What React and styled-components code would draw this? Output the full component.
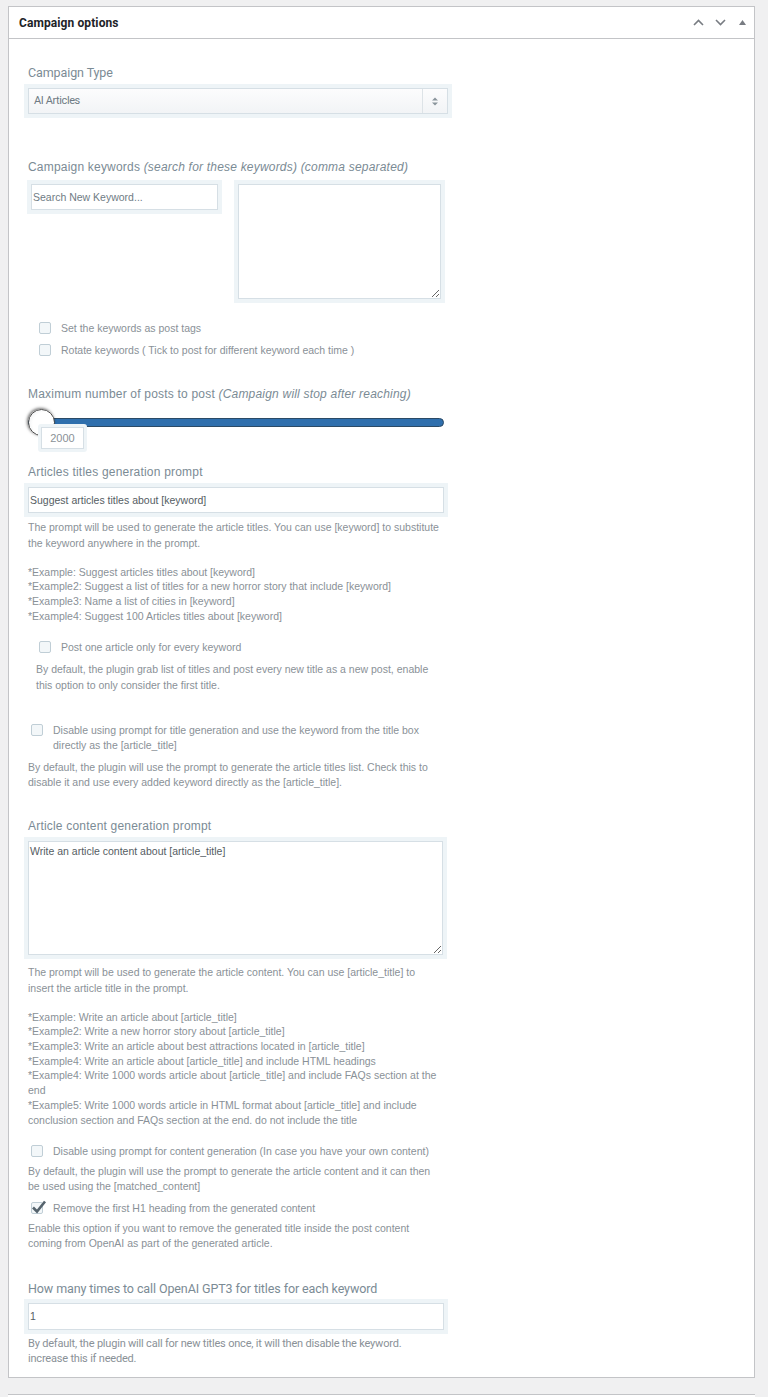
import React from "react";
import styled, { createGlobalStyle } from "styled-components";

const GlobalStyle = createGlobalStyle`
  body {
    margin: 0;
    background: #f0f0f1;
    font-family: "Liberation Sans", Arial, sans-serif;
  }
`;

const Page = styled.div`
  padding: 6px 13px 0 8px;
`;

const Postbox = styled.div`
  background: #fff;
  border: 1px solid #c3c4c7;
`;

const NextPostbox = styled.div`
  margin-top: 16px;
  height: 4px;
  background: #fff;
  border-top: 1px solid #c3c4c7;
`;

const PostboxHeader = styled.div`
  display: flex;
  align-items: center;
  height: 31px;
  padding: 0 6px 0 10px;
  border-bottom: 1px solid #c3c4c7;
`;

const HeaderTitle = styled.h2`
  flex: 1;
  margin: 0;
  font-family: Roboto, "Liberation Sans", sans-serif;
  font-size: 12px;
  font-weight: 700;
  letter-spacing: 0.1px;
  color: #1d2327;
`;

const HeaderActions = styled.div`
  display: flex;
  align-items: center;
  gap: 10px;
`;

const HandleButton = styled.span`
  display: flex;
  align-items: center;
  justify-content: center;
  width: 12px;
  height: 12px;
  color: #787c82;
`;

const Body = styled.div`
  padding: 0 0 11px 19px;
`;

const Label = styled.div`
  margin-top: ${(p) => p.$top || 0}px;
  font-family: ${(p) =>
    p.$narrow ? 'Roboto, "Liberation Sans", sans-serif' : '"Liberation Sans", Arial, sans-serif'};
  font-size: ${(p) => (p.$narrow ? "12.5px" : "12px")};
  letter-spacing: ${(p) => (p.$narrow ? "-0.1px" : "0.2px")};
  line-height: 16px;
  color: #7b8b95;

  em {
    font-style: italic;
  }
`;

const SelectBox = styled.div`
  display: flex;
  margin-top: 7px;
  width: 418px;
  height: 24px;
  border: 1px solid #d6dfe5;
  background: linear-gradient(#fcfcfd, #f2f4f6);
  box-shadow: 0 0 0 4px #eef4f7;
`;

const SelectValue = styled.span`
  flex: 1;
  padding-left: 5px;
  line-height: 24px;
  font-family: Roboto, "Liberation Sans", sans-serif;
  font-size: 11px;
  letter-spacing: -0.4px;
  color: #6e7b83;
`;

const SelectArrows = styled.span`
  display: flex;
  align-items: center;
  justify-content: center;
  width: 24px;
  border-left: 1px solid #dde3e7;
  color: #8a959c;
`;

const KeywordRow = styled.div`
  display: flex;
  align-items: flex-start;
  gap: 20px;
  margin-top: 9px;
  padding-left: 3px;
`;

const TextInput = styled.input`
  display: block;
  box-sizing: border-box;
  margin: ${(p) => p.$top || 0}px 0 0;
  width: ${(p) => p.$width}px;
  height: ${(p) => p.$height || 26}px;
  padding: 0 1px;
  border: 1px solid #d6dfe5;
  border-radius: 0;
  background: #fff;
  box-shadow: 0 0 0 4px #eef4f7;
  font-family: "Liberation Sans", Arial, sans-serif;
  font-size: 10.5px;
  color: #555d63;
  outline: none;

  &::placeholder {
    color: #6f7c84;
  }
`;

const TextArea = styled.textarea`
  display: block;
  box-sizing: border-box;
  margin: ${(p) => p.$top || 0}px 0 0;
  width: ${(p) => p.$width}px;
  height: ${(p) => p.$height}px;
  padding: 3px 1px;
  border: 1px solid #d6dfe5;
  border-radius: 0;
  background: #fff;
  box-shadow: 0 0 0 4px #eef4f7;
  font-family: "Liberation Sans", Arial, sans-serif;
  font-size: 10.5px;
  color: #555d63;
  outline: none;
`;

const CheckList = styled.div`
  display: flex;
  flex-direction: column;
  gap: 6px;
  margin-top: ${(p) => p.$top || 0}px;
`;

const CheckRow = styled.label`
  display: flex;
  align-items: flex-start;
  gap: 10px;
  margin-top: ${(p) => p.$top || 0}px;
  padding-left: ${(p) => p.$indent || 0}px;
  font-size: 10.5px;
  line-height: ${(p) => p.$lh || 16}px;
  white-space: nowrap;
  color: #8a9197;
`;

const Box = styled.span`
  position: relative;
  flex: none;
  box-sizing: border-box;
  width: 12px;
  height: 12px;
  margin-top: ${(p) => p.$offset || 2}px;
  border: 1px solid #c0ced6;
  border-radius: 2px;
  background: #f3f7f9;

  svg {
    position: absolute;
    left: -1px;
    top: -3px;
  }
`;

const Help = styled.p`
  margin: ${(p) => p.$top || 0}px 0 0;
  padding-left: ${(p) => p.$indent || 0}px;
  font-family: ${(p) =>
    p.$narrow ? 'Roboto, "Liberation Sans", sans-serif' : '"Liberation Sans", Arial, sans-serif'};
  font-size: ${(p) => (p.$narrow ? "11px" : "10.5px")};
  letter-spacing: ${(p) => (p.$narrow ? "-0.2px" : "0")};
  line-height: ${(p) => p.$lh || 16}px;
  white-space: nowrap;
  color: #8a9197;
`;

const Examples = styled.div`
  margin-top: ${(p) => p.$top || 0}px;
  font-size: 10.5px;
  line-height: 14.7px;
  white-space: nowrap;
  color: #8a9197;
`;

const SliderWrap = styled.div`
  position: relative;
  margin-top: 16px;
  width: 416px;
  height: 46px;
`;

const Track = styled.div`
  height: 9px;
  box-sizing: border-box;
  border: 1px solid #2b4a66;
  border-radius: 5px;
  background: #2f6fad;
`;

const Knob = styled.span`
  position: absolute;
  left: 0;
  top: -9px;
  box-sizing: border-box;
  width: 27px;
  height: 27px;
  border: 1px solid #4a4a4a;
  border-radius: 50%;
  background: radial-gradient(circle at 60% 55%, #ffffff 55%, #e4e6e8);
  box-shadow: -1px -1px 3px rgba(0, 0, 0, 0.55);
`;

const Bubble = styled.div`
  position: absolute;
  left: 10px;
  top: 6px;
  padding: 3px;
  background: #eef4f7;
  border-radius: 3px;
`;

const BubbleValue = styled.div`
  width: 41px;
  height: 20px;
  border: 1px solid #d6dfe5;
  background: #fff;
  text-align: center;
  font-size: 11px;
  line-height: 20px;
  color: #8a9197;
`;

const ChevronIcon = ({ up }) => (
  <svg width="11" height="7" viewBox="0 0 11 7" fill="none">
    <path
      d={up ? "M1 6 L5.5 1.5 L10 6" : "M1 1 L5.5 5.5 L10 1"}
      stroke="currentColor"
      strokeWidth="1.6"
    />
  </svg>
);

const TriangleIcon = () => (
  <svg width="7" height="5" viewBox="0 0 7 5">
    <path d="M0 5 L3.5 0 L7 5 Z" fill="currentColor" />
  </svg>
);

const SortArrows = () => (
  <svg width="6" height="9" viewBox="0 0 6 9">
    <path d="M0 3.5 L3 0.5 L6 3.5 Z M0 5.5 L3 8.5 L6 5.5 Z" fill="currentColor" />
  </svg>
);

const Checkbox = ({ checked, offset }) => (
  <Box $offset={offset}>
    {checked && (
      <svg width="16" height="14" viewBox="0 0 16 14">
        <path d="M2 7.5 L6 11.5 L14 1.5" fill="none" stroke="#55636d" strokeWidth="2.6" />
      </svg>
    )}
  </Box>
);

const Lines = ({ lines }) =>
  lines.map((line, i) => (
    <React.Fragment key={i}>
      {i > 0 && <br />}
      {line}
    </React.Fragment>
  ));

const titleExamples = [
  "*Example: Suggest articles titles about [keyword]",
  "*Example2: Suggest a list of titles for a new horror story that include [keyword]",
  "*Example3: Name a list of cities in [keyword]",
  "*Example4: Suggest 100 Articles titles about [keyword]",
];

const contentExamples = [
  "*Example: Write an article about [article_title]",
  "*Example2: Write a new horror story about [article_title]",
  "*Example3: Write an article about best attractions located in [article_title]",
  "*Example4: Write an article about [article_title] and include HTML headings",
  "*Example4: Write 1000 words article about [article_title] and include FAQs section at the",
  "end",
  "*Example5: Write 1000 words article in HTML format about [article_title] and include",
  "conclusion section and FAQs section at the end. do not include the title",
];

const App = () => {
  return (
    <Page>
      <GlobalStyle />
      <Postbox>
        <PostboxHeader>
          <HeaderTitle>Campaign options</HeaderTitle>
          <HeaderActions>
            <HandleButton>
              <ChevronIcon up />
            </HandleButton>
            <HandleButton>
              <ChevronIcon />
            </HandleButton>
            <HandleButton>
              <TriangleIcon />
            </HandleButton>
          </HeaderActions>
        </PostboxHeader>

        <Body>
          <Label $top={26} $narrow>
            Campaign Type
          </Label>
          <SelectBox>
            <SelectValue>AI Articles</SelectValue>
            <SelectArrows>
              <SortArrows />
            </SelectArrows>
          </SelectBox>

          <Label $top={45}>
            Campaign keywords <em>(search for these keywords) (comma separated)</em>
          </Label>
          <KeywordRow>
            <TextInput $width={187} placeholder="Search New Keyword..." />
            <TextArea $width={203} $height={115} />
          </KeywordRow>

          <CheckList $top={21}>
            <CheckRow $indent={11}>
              <Checkbox />
              Set the keywords as post tags
            </CheckRow>
            <CheckRow $indent={11}>
              <Checkbox />
              Rotate keywords ( Tick to post for different keyword each time )
            </CheckRow>
          </CheckList>

          <Label $top={28}>
            Maximum number of posts to post <em>(Campaign will stop after reaching)</em>
          </Label>
          <SliderWrap>
            <Track />
            <Knob />
            <Bubble>
              <BubbleValue>2000</BubbleValue>
            </Bubble>
          </SliderWrap>

          <Label>Articles titles generation prompt</Label>
          <TextInput
            $top={7}
            $width={416}
            defaultValue="Suggest articles titles about [keyword]"
          />
          <Help $top={6}>
            <Lines
              lines={[
                "The prompt will be used to generate the article titles. You can use [keyword] to substitute",
                "the keyword anywhere in the prompt.",
              ]}
            />
          </Help>
          <Examples $top={13.6}>
            <Lines lines={titleExamples} />
          </Examples>

          <CheckRow $top={15.6} $indent={11}>
            <Checkbox />
            Post one article only for every keyword
          </CheckRow>
          <Help $top={6} $indent={8}>
            <Lines
              lines={[
                "By default, the plugin grab list of titles and post every new title as a new post, enable",
                "this option to only consider the first title.",
              ]}
            />
          </Help>

          <CheckRow $top={29.5} $indent={3} $lh={15}>
            <Checkbox offset={1.5} />
            <span>
              <Lines
                lines={[
                  "Disable using prompt for title generation and use the keyword from the title box",
                  "directly as the [article_title]",
                ]}
              />
            </span>
          </CheckRow>
          <Help $top={7} $lh={15}>
            <Lines
              lines={[
                "By default, the plugin will use the prompt to generate the article titles list. Check this to",
                "disable it and use every added keyword directly as the [article_title].",
              ]}
            />
          </Help>

          <Label $top={28.5}>Article content generation prompt</Label>
          <TextArea
            $top={7}
            $width={415}
            $height={114}
            defaultValue="Write an article content about [article_title]"
          />
          <Help $top={9}>
            <Lines
              lines={[
                "The prompt will be used to generate the article content. You can use [article_title] to",
                "insert the article title in the prompt.",
              ]}
            />
          </Help>
          <Examples $top={13.6}>
            <Lines lines={contentExamples} />
          </Examples>

          <CheckRow $top={15.7} $indent={3}>
            <Checkbox />
            Disable using prompt for content generation (In case you have your own content)
          </CheckRow>
          <Help $top={5.5} $lh={15}>
            <Lines
              lines={[
                "By default, the plugin will use the prompt to generate the article content and it can then",
                "be used using the [matched_content]",
              ]}
            />
          </Help>
          <CheckRow $top={5.5} $indent={3}>
            <Checkbox checked />
            Remove the first H1 heading from the generated content
          </CheckRow>
          <Help $top={5.5} $lh={15}>
            <Lines
              lines={[
                "Enable this option if you want to remove the generated title inside the post content",
                "coming from OpenAI as part of the generated article.",
              ]}
            />
          </Help>

          <Label $top={29.5} $narrow>
            How many times to call OpenAI GPT3 for titles for each keyword
          </Label>
          <TextInput $top={6} $width={416} $height={27} defaultValue="1" />
          <Help $top={6.5} $lh={15} $narrow>
            <Lines
              lines={[
                "By default, the plugin will call for new titles once, it will then disable the keyword.",
                "increase this if needed.",
              ]}
            />
          </Help>
        </Body>
      </Postbox>
      <NextPostbox />
    </Page>
  );
};

export default App;
